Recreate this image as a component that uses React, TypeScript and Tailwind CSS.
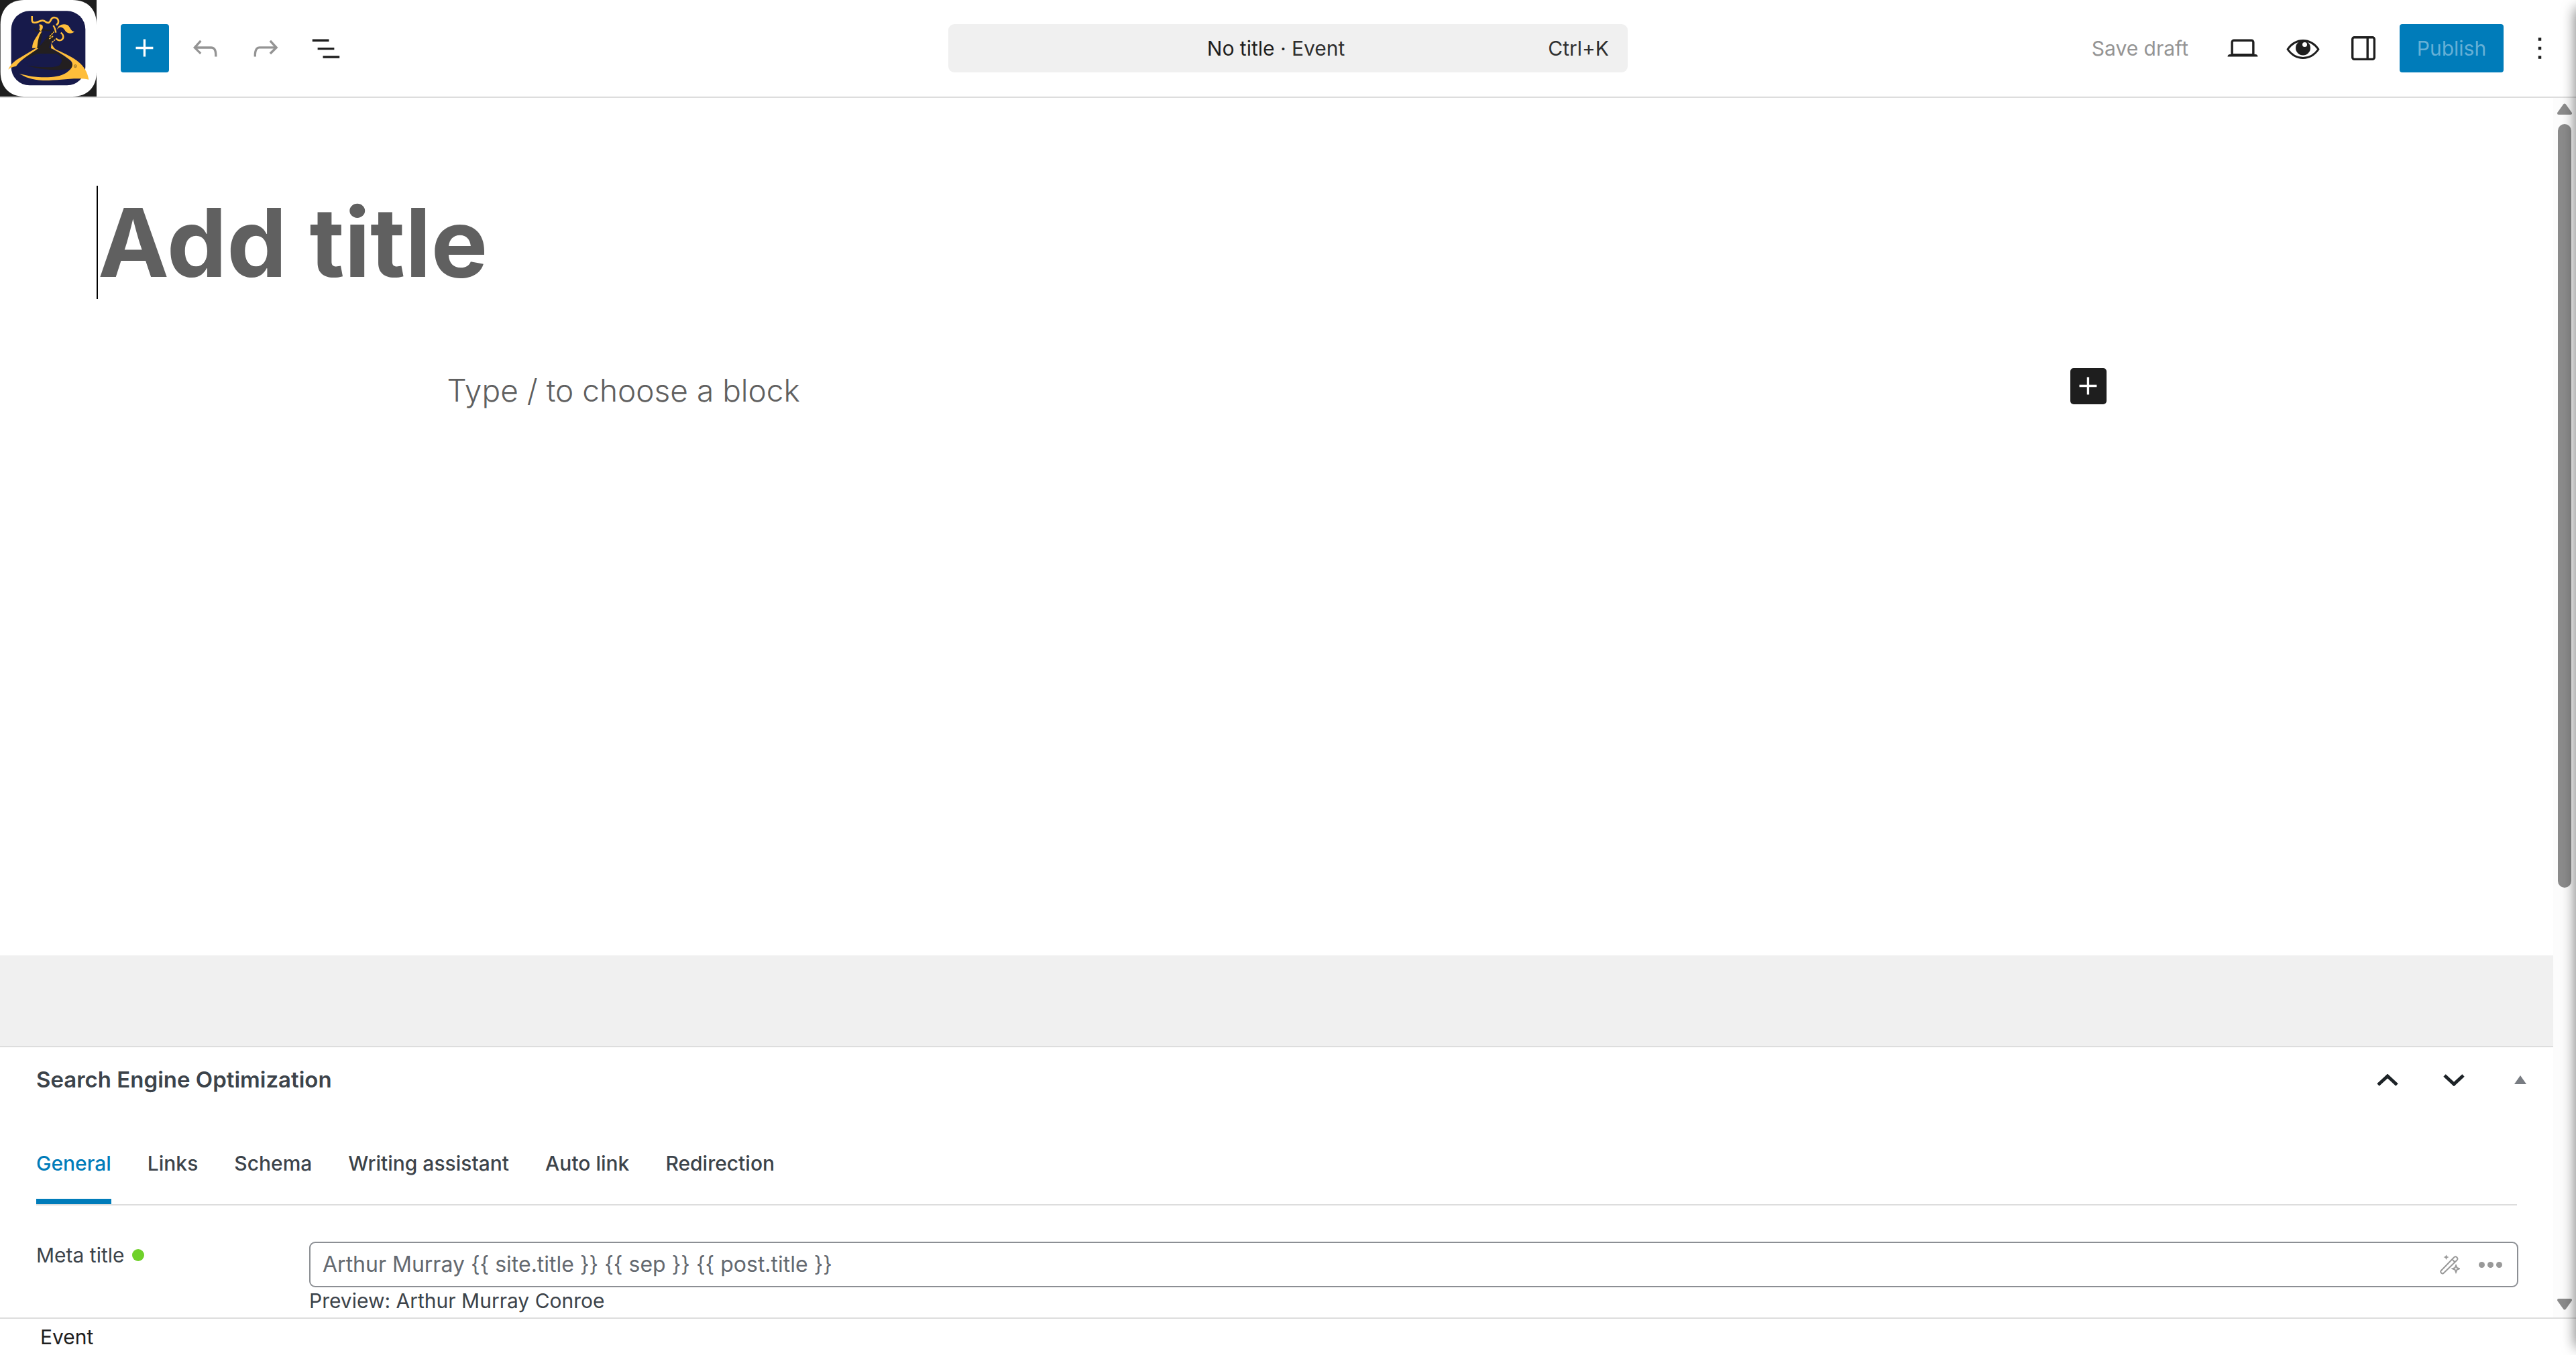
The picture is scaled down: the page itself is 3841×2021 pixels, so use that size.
import type { ReactNode } from 'react';

const ICONS = {
  plus: 'M11 12.5V17.5H12.5V12.5H17.5V11H12.5V6H11V11H6V12.5H11Z',
  undo: 'M18.3 11.7c-.6-.6-1.4-.9-2.3-.9H6.7l2.9-3.3-1.1-1-4.5 5L8.5 16l1-1-2.7-2.7H16c.5 0 .9.2 1.3.5 1 1 1 3.4 1 4.5v.3h1.5v-.2c0-1.5 0-4.3-1.5-5.7z',
  redo: 'M15.6 6.5l-1.1 1 2.9 3.3H8c-.9 0-1.7.3-2.3.9-1.4 1.5-1.4 4.2-1.4 5.6v.2h1.5v-.3c0-1.1 0-3.5 1-4.5.3-.3.7-.5 1.3-.5h9.2L14.5 15l1.1 1.1 4.6-4.6-4.6-5z',
  list: 'M3 6h11v1.5H3V6Zm3.5 5.5h11V13h-11v-1.5ZM21 17H10v1.5h11V17Z',
  desktop: 'M20.5 16h-.7V8c0-1.1-.9-2-2-2H6.2c-1.1 0-2 .9-2 2v8h-.7c-.8 0-1.5.7-1.5 1.5h20c0-.8-.7-1.5-1.5-1.5zM5.7 8c0-.3.2-.5.5-.5h11.6c.3 0 .5.2.5.5v7.6H5.7V8z',
  drawer: 'M18 4H6c-1.1 0-2 .9-2 2v12c0 1.1.9 2 2 2h12c1.1 0 2-.9 2-2V6c0-1.1-.9-2-2-2zm-4 14.5H6c-.3 0-.5-.2-.5-.5V6c0-.3.2-.5.5-.5h8v13zm4.5-.5c0 .3-.2.5-.5.5h-2.5v-13H18c.3 0 .5.2.5.5v12z',
  more: 'M13 19h-2v-2h2v2zm0-6h-2v-2h2v2zm0-6h-2V5h2v2z',
};

const TABS = ['General', 'Links', 'Schema', 'Writing assistant', 'Auto link', 'Redirection'];

function Icon({ name }: { name: keyof typeof ICONS }) {
  return (
    <svg viewBox="0 0 24 24" className="size-[54px]" fill="currentColor" aria-hidden="true">
      <path d={ICONS[name]} />
    </svg>
  );
}

interface IconButtonProps {
  label: string;
  children: ReactNode;
  className?: string;
  disabled?: boolean;
}

function IconButton({ label, children, className = '', disabled }: IconButtonProps) {
  return (
    <button type="button" aria-label={label} disabled={disabled} className={`flex size-[72px] shrink-0 items-center justify-center ${className}`}>
      {children}
    </button>
  );
}

function SiteLogo() {
  return (
    <svg viewBox="0 0 432 432" className="size-36" aria-hidden="true">
      <path fill="#fff" d="M108 0H324C392 0 432 42 432 110V322C432 390 392 432 324 432H108C42 432 2 390 2 322V110C2 42 42 0 108 0Z" />
      <rect x="50" y="49" width="332" height="333" rx="82" fill="#171a4b" />
      {/* dark folds */}
      <g fill="#231f20">
        <path d="M168 214L232 160L246 168L226 190L219 214C262 238 308 262 324 288V307C252 318 178 312 122 293C178 302 250 306 268 290C290 262 268 240 206 240H166L96 270Z" />
        <path d="M182 142L190 150L178 206L198 182L240 132L232 168L164 218C162 190 170 160 182 142Z" />
        <path d="M206 240H250C284 252 282 284 256 294C196 302 124 290 96 274Z" fill="#171a4b" />
      </g>
      <path d="M156 126C158 146 176 138 190 134S214 142 228 134" fill="none" stroke="#231f20" strokeWidth="6" />
      {/* arms and heads */}
      <g fill="none" stroke="#ffbe3b">
        <path d="M143 72C144 88 140 99 152 101C168 104 174 92 190 92C204 92 208 106 219 101C230 94 226 78 242 78C262 79 268 100 252 112" strokeWidth="8" />
        <path d="M238 114C246 124 248 134 250 146" strokeWidth="7" />
        <path d="M272 146C288 158 286 174 272 180C262 183 256 178 250 172" strokeWidth="7" />
        <path d="M222 164L242 142M220 174L240 160M232 190L246 178M250 174L270 182" strokeWidth="5" strokeDasharray="9 3" />
      </g>
      <g fill="#ffbe3b">
        <path d="M256 132C258 112 282 104 302 112C318 124 314 140 333 142C322 152 302 152 292 138C282 120 268 114 256 132Z" />
        <path d="M174 110C186 108 194 112 191 126L183 140L175 133C180 124 178 116 174 110Z" />
        <path d="M177 142L188 140C170 166 170 184 166 215H144C145 184 162 170 177 142Z" />
        <path d="M160 216L172 216C132 244 94 266 72 296C58 298 48 302 37 311C44 294 60 276 84 262Z" />
        <path d="M230 192C238 210 242 218 256 224C332 258 386 286 397 356C340 344 252 362 192 360C142 356 112 346 87 329C152 350 252 354 296 326C328 306 332 284 312 268C280 242 250 226 228 216Z" />
      </g>
      <circle cx="337" cy="296" r="6" fill="none" stroke="#5a4420" strokeWidth="2" />
      <circle cx="337" cy="296" r="2" fill="#5a4420" />
    </svg>
  );
}

function EyeIcon() {
  return (
    <svg viewBox="0 0 54 54" className="size-[54px]" aria-hidden="true">
      <path d="M4 28.500C10 20 18 15.500 27 15.500S44 20 50 28.500C44 37 36 41.500 27 41.500S10 37 4 28.500Z" fill="none" stroke="currentColor" strokeWidth="3" strokeLinejoin="round" />
      <circle cx="27" cy="26.500" r="11" fill="currentColor" />
      <circle cx="29.500" cy="21.500" r="3.500" fill="#fff" />
    </svg>
  );
}

function WandIcon() {
  return (
    <svg viewBox="0 0 30 30" className="size-[30px]" fill="none" stroke="currentColor" strokeWidth="2" aria-hidden="true">
      <path d="M2 24L21 4.500A3 3 0 0 1 25.500 8.500L6 27.500A2.500 2.500 0 0 1 2 24ZM18.500 7.500L22.500 11.500" />
      <path d="M9.500 0.500L10.800 3L13.500 4L10.800 5.200L9.500 8L8.200 5.200L5.500 4L8.200 3Z" fill="currentColor" stroke="none" />
      <path d="M24 16.500L25.500 20L29 21.300L25.500 22.700L24 26.500L22.500 22.700L19 21.300L22.500 20Z" />
    </svg>
  );
}

function EditorHeader() {
  return (
    <header className="grid shrink-0 grid-cols-[1fr_1013px_1fr] items-center border-b-2 border-[#ddd] bg-white">
      <div className="flex items-center gap-[18px]">
        <a href="#dashboard" aria-label="View Posts" className="mr-[18px] bg-[#1e1e1e]">
          <SiteLogo />
        </a>
        <IconButton label="Block Inserter" className="rounded-[4px] bg-[#007cba] text-white"><Icon name="plus" /></IconButton>
        <IconButton label="Undo" disabled className="text-[#949494]"><Icon name="undo" /></IconButton>
        <IconButton label="Redo" disabled className="text-[#949494]"><Icon name="redo" /></IconButton>
        <IconButton label="Document Overview"><Icon name="list" /></IconButton>
      </div>
      <button type="button" className="flex h-[72px] items-center rounded-[9px] bg-[#f0f0f0] pr-7 pl-[83px]">
        <span className="flex-1 text-center">No title · <span className="text-[#2f2f2f]">Event</span></span>
        <span className="text-[#2f2f2f]">Ctrl+K</span>
      </button>
      <div className="flex items-center justify-end gap-[18px] pr-[18px]">
        <button type="button" disabled className="h-[72px] px-[27px] text-[#949494]">Save draft</button>
        <IconButton label="View"><Icon name="desktop" /></IconButton>
        <IconButton label="Preview"><EyeIcon /></IconButton>
        <IconButton label="Settings"><Icon name="drawer" /></IconButton>
        <button type="button" disabled className="h-[72px] w-[155px] rounded-[4px] bg-[#007cba] text-[#66b0d6]">Publish</button>
        <IconButton label="Options"><Icon name="more" /></IconButton>
      </div>
    </header>
  );
}

function Canvas() {
  return (
    <section className="flex-1 bg-white pt-[131px]">
      <div className="px-36">
        <input
          aria-label="Add title"
          placeholder="Add title"
          className="block h-[169px] w-full border-l-2 border-black text-[142px] font-bold outline-none placeholder:text-[#606060]"
        />
      </div>
      <div className="mx-auto mt-24 flex max-w-[2474px] items-start">
        <input
          aria-label="Add default block"
          placeholder="Type / to choose a block"
          className="h-20 min-w-0 flex-1 text-[46px] font-light outline-none placeholder:text-[#606060]"
        />
        <button type="button" aria-label="Add block" className="mt-[7px] flex size-[54px] items-center justify-center rounded-[5px] bg-[#1e1e1e] text-white">
          <Icon name="plus" />
        </button>
      </div>
    </section>
  );
}

function SeoPanel() {
  return (
    <section className="border-t-2 border-[#ddd] bg-white pb-[5px] text-[#3c434a]">
      <div className="flex h-[98px] items-center pl-[54px]">
        <h2 className="flex-1 text-[33px] font-semibold">Search Engine Optimization</h2>
        <button type="button" aria-label="Move up" className="flex w-[99px] justify-center text-[#1d2327]">
          <svg viewBox="0 0 32 18" className="h-[18px] w-8" fill="none" stroke="currentColor" strokeWidth="5"><path d="M2 16L16 3L30 16" /></svg>
        </button>
        <button type="button" aria-label="Move down" className="flex w-[99px] justify-center text-[#1d2327]">
          <svg viewBox="0 0 32 18" className="h-[18px] w-8" fill="none" stroke="currentColor" strokeWidth="5"><path d="M2 2L16 15L30 2" /></svg>
        </button>
        <button type="button" aria-label="Toggle panel" className="flex w-[99px] justify-center text-[#787c82]">
          <svg viewBox="0 0 18 14" className="h-3.5 w-[18px]" fill="currentColor"><path d="M9 0L18 13H0Z" /></svg>
        </button>
      </div>
      <div className="mr-[52px] ml-[54px]">
        <div role="tablist" className="mr-0.5 flex gap-[54px] border-b-2 border-[#ddd] font-medium">
          {TABS.map((tab, i) => (
            <button
              key={tab}
              type="button"
              role="tab"
              aria-selected={i === 0}
              className={`h-[136px] border-b-8 pt-[22px] ${i === 0 ? 'border-[#007cba] text-[#007cba]' : 'border-transparent'}`}
            >
              {tab}
            </button>
          ))}
        </div>
        <div className="mt-[54px] flex leading-10">
          <label htmlFor="meta-title" className="flex h-10 w-[407px] shrink-0 items-center gap-3">
            Meta title
            <span className="size-[18px] rounded-full bg-[#6fd12a]" />
          </label>
          <div className="flex-1">
            <div className="flex h-[68px] items-center rounded-[9px] border-2 border-[#8c8f94] pr-2.5 pl-[18px] text-[#999]">
              <input
                id="meta-title"
                defaultValue="Arthur Murray {{ site.title }} {{ sep }} {{ post.title }}"
                className="min-w-0 flex-1 text-[32px] text-[#646970] outline-none"
              />
              <button type="button" aria-label="Generate" className="flex w-[60px] justify-center"><WandIcon /></button>
              <button type="button" aria-label="Insert variable" className="flex w-[60px] justify-center gap-1">
                <span className="size-[9px] rounded-full bg-[#999]" />
                <span className="size-[9px] rounded-full bg-[#999]" />
                <span className="size-[9px] rounded-full bg-[#999]" />
              </button>
            </div>
            <p>Preview: Arthur Murray Conroe</p>
          </div>
        </div>
      </div>
    </section>
  );
}

function ScrollTrack() {
  return (
    <div className="flex w-[34px] shrink-0 flex-col items-center bg-[#fcfcfc] pt-2 pb-[11px] text-[#8b8b8b]" aria-hidden="true">
      <svg viewBox="0 0 22 17" className="h-[17px] w-[22px]" fill="currentColor" stroke="currentColor" strokeWidth="4" strokeLinejoin="round"><path d="M11 2.500L20 15H2Z" /></svg>
      <div className="mt-3.5 flex-1">
        <div className="h-[65%] w-5 rounded-full bg-[#8b8b8b]" />
      </div>
      <svg viewBox="0 0 22 17" className="h-[17px] w-[22px]" fill="currentColor" stroke="currentColor" strokeWidth="4" strokeLinejoin="round"><path d="M11 14.500L20 2H2Z" /></svg>
    </div>
  );
}

export default function App() {
  return (
    <div className="relative flex min-h-screen flex-col overflow-hidden bg-white font-['Inter',sans-serif] text-[30px] text-[#1e1e1e]">
      <EditorHeader />
      <main className="flex flex-1">
        <div className="flex min-w-0 flex-1 flex-col">
          <Canvas />
          <div className="h-[135px] bg-[#f0f0f0]" />
          <SeoPanel />
        </div>
        <ScrollTrack />
      </main>
      <footer className="flex h-14 items-center border-t-2 border-[#ddd] bg-white pl-[60px]">Event</footer>
      {/* shadow cast by whatever is docked past the right edge */}
      <div className="pointer-events-none absolute inset-y-3 left-full w-4 shadow-[0_0_20px_rgba(0,0,0,0.6)]" />
    </div>
  );
}
